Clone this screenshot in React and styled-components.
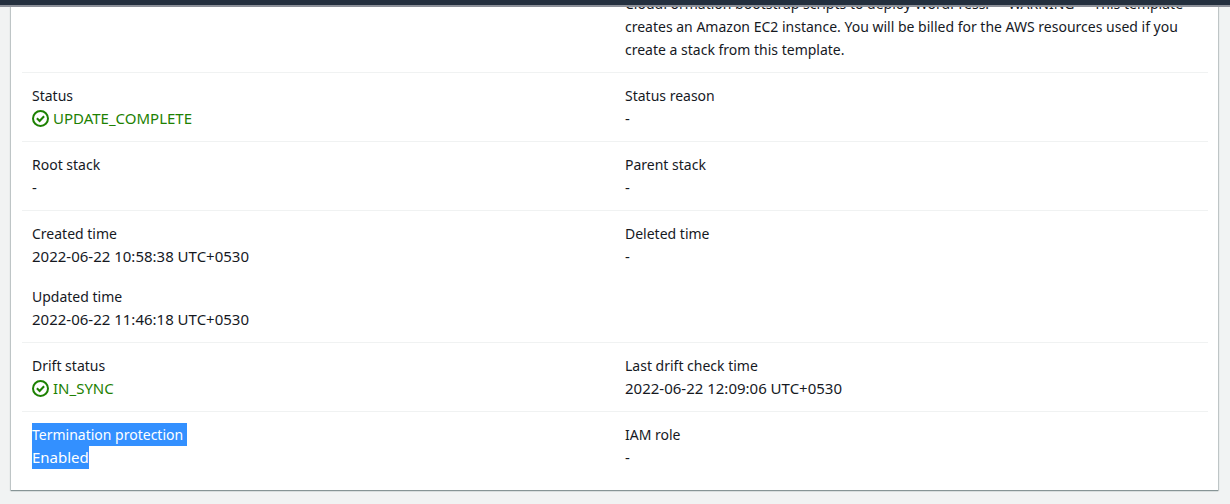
import React from "react";
import styled, { createGlobalStyle } from "styled-components";

const GlobalStyle = createGlobalStyle`
  *, *::before, *::after { box-sizing: border-box; }
  body {
    margin: 0;
    background: #f1f3f3;
    color: #16191f;
    font-family: "Noto Sans", "Open Sans", sans-serif;
    font-size: 15px;
    line-height: 23px;
  }
`;

const Page = styled.div`
  display: flex;
  flex-direction: column;
  height: 100vh;
  overflow: hidden;
`;

const TopBar = styled.header`
  position: fixed;
  inset: 0 0 auto;
  z-index: 1;
  height: 5px;
  background: #232f3e;
  box-shadow: 0 2px 0 #8b8f98;
`;

const Main = styled.main`
  flex: 1;
  min-height: 0;
  display: flex;
  flex-direction: column;
  justify-content: flex-end;
  padding: 0 12px 14px 11px;
`;

const Panel = styled.section`
  flex: none;
  padding: 0 10px 10px 11px;
  background: #fff;
  box-shadow: 0 1px 1px #879596, 0 0 1px 1px #c9cfd0;
`;

const Row = styled.dl`
  display: grid;
  grid-template-columns: 1fr 1fr;
  margin: 0;
  padding: 11px 0;

  & + & {
    border-top: 1px solid #f0f2f2;
  }
`;

const Column = styled.div`
  display: flex;
  flex-direction: column;
  gap: 17px;
  padding: 0 10px;
`;

const Label = styled.dt`
  font-size: 14px;
`;

const Value = styled.dd`
  margin: 0;
`;

const Description = styled(Value)`
  font-size: 14px;
`;

const Status = styled.span`
  display: inline-flex;
  align-items: center;
  gap: 4px;
  color: #1d8102;
  vertical-align: top;
`;

const Icon = styled.svg`
  flex: none;
  width: 17px;
  height: 17px;
  fill: none;
  stroke: currentColor;
  stroke-width: 2;
`;

const Selected = styled.span`
  display: inline-block;
  padding-right: ${(p) => (p.$lineEnd ? "4px" : "0")};
  background: #3390ff;
  color: #fff;
  vertical-align: top;
`;

function Success({ children }) {
  return (
    <Status>
      <Icon viewBox="0 0 17 17" aria-hidden="true">
        <circle cx="8.5" cy="8.5" r="7.5" />
        <path d="M4.9 8.3 7.6 11 12.1 6.2" />
      </Icon>
      {children}
    </Status>
  );
}

function Field({ label, children }) {
  return (
    <div>
      <Label>{label}</Label>
      <Value>{children}</Value>
    </div>
  );
}

export default function App() {
  return (
    <Page>
      <GlobalStyle />
      <TopBar />
      <Main>
        <Panel>
          <Row>
            <Column />
            <Column>
              <Description>
                CloudFormation bootstrap scripts to deploy WordPress. **WARNING** This template
                creates an Amazon EC2 instance. You will be billed for the AWS resources used if you
                create a stack from this template.
              </Description>
            </Column>
          </Row>
          <Row>
            <Column>
              <Field label="Status"><Success>UPDATE_COMPLETE</Success></Field>
            </Column>
            <Column>
              <Field label="Status reason">-</Field>
            </Column>
          </Row>
          <Row>
            <Column>
              <Field label="Root stack">-</Field>
            </Column>
            <Column>
              <Field label="Parent stack">-</Field>
            </Column>
          </Row>
          <Row>
            <Column>
              <Field label="Created time">2022-06-22 10:58:38 UTC+0530</Field>
              <Field label="Updated time">2022-06-22 11:46:18 UTC+0530</Field>
            </Column>
            <Column>
              <Field label="Deleted time">-</Field>
            </Column>
          </Row>
          <Row>
            <Column>
              <Field label="Drift status"><Success>IN_SYNC</Success></Field>
            </Column>
            <Column>
              <Field label="Last drift check time">2022-06-22 12:09:06 UTC+0530</Field>
            </Column>
          </Row>
          <Row>
            <Column>
              <Field label={<Selected $lineEnd>Termination protection</Selected>}>
                <Selected>Enabled</Selected>
              </Field>
            </Column>
            <Column>
              <Field label="IAM role">-</Field>
            </Column>
          </Row>
        </Panel>
      </Main>
    </Page>
  );
}
